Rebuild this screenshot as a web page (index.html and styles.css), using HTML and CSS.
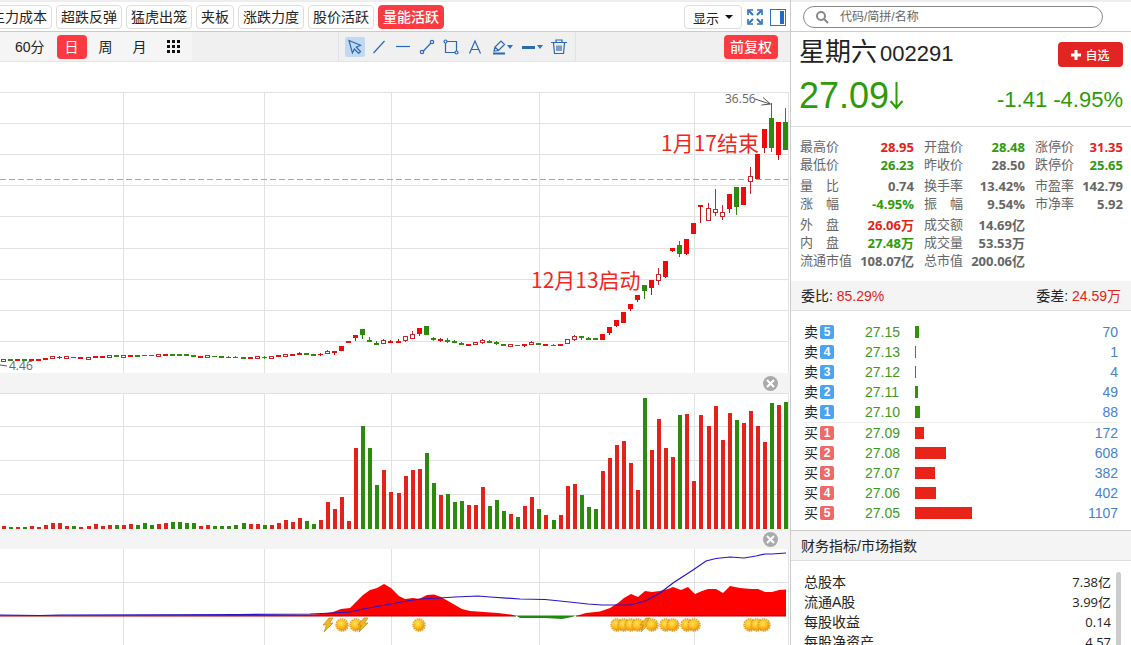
FILE: index.html
```html
<!DOCTYPE html>
<html lang="zh-CN">
<head>
    <meta charset="UTF-8">
    <meta name="viewport" content="width=device-width, initial-scale=1.0">
    <title>星期六 002291</title>
    <link rel="stylesheet" href="styles.css">
</head>
<body>
    <div class="app">
        <main class="charts">
            <nav class="indicator-bar">
                <div class="indicators">
                    <button class="tag">主力成本</button>
                    <button class="tag">超跌反弹</button>
                    <button class="tag">猛虎出笼</button>
                    <button class="tag">夹板</button>
                    <button class="tag">涨跌力度</button>
                    <button class="tag">股价活跃</button>
                    <button class="tag active">量能活跃</button>
                </div>
                <div class="view-tools">
                    <button class="display-btn">显示<span class="caret"></span></button>
                    <button class="icon-btn" aria-label="全屏">
                        <svg width="16" height="16" viewBox="0 0 16 16" fill="none" stroke="#2a72c4" stroke-width="2">
                            <path d="M1 6V1h5M10 1h5v5M15 10v5h-5M6 15H1v-5" stroke-width="1.6"/>
                            <path d="M2 2l4 4M14 2l-4 4M14 14l-4-4M2 14l4-4"/>
                        </svg>
                    </button>
                    <button class="icon-btn" aria-label="侧栏">
                        <svg width="16" height="17" viewBox="0 0 16 17">
                            <rect x=".5" y=".5" width="15" height="16" fill="#fff" stroke="#2a72c4"/>
                            <rect x="10" y="2" width="4" height="13" fill="#1f6cc5"/>
                        </svg>
                    </button>
                </div>
            </nav>

            <div class="period-bar">
                <div class="periods">
                    <button class="period">60分</button>
                    <button class="period active">日</button>
                    <button class="period">周</button>
                    <button class="period">月</button>
                    <button class="period" aria-label="更多周期">
                        <svg width="13" height="13" viewBox="0 0 13 13" fill="#111">
                            <path d="M0 0h3v3H0zM5 0h3v3H5zM10 0h3v3h-3zM0 5h3v3H0zM5 5h3v3H5zM10 5h3v3h-3zM0 10h3v3H0zM5 10h3v3H5zM10 10h3v3h-3z"/>
                        </svg>
                    </button>
                </div>
                <div class="draw-tools">
                    <button class="tool selected" aria-label="选择">
                        <svg width="16" height="16" viewBox="0 0 16 16"><path d="M2 1.5l11.5 4.8-4.2 1.9 4.2 4.3-1.8 1.8-4.3-4.3-2 3.8z"/></svg>
                    </button>
                    <button class="tool" aria-label="直线">
                        <svg width="16" height="16" viewBox="0 0 16 16"><path d="M2.500 14L13.500 2"/></svg>
                    </button>
                    <button class="tool" aria-label="水平线">
                        <svg width="16" height="16" viewBox="0 0 16 16"><path d="M1 7.500h14"/></svg>
                    </button>
                    <button class="tool" aria-label="线段">
                        <svg width="16" height="16" viewBox="0 0 16 16"><path d="M4 12.500L12 4"/><circle cx="3" cy="13" r="1.700"/><circle cx="13" cy="3" r="1.700"/></svg>
                    </button>
                    <button class="tool" aria-label="矩形">
                        <svg width="16" height="16" viewBox="0 0 16 16"><path d="M4 2.500h9.500V12M12 13.500H2.500V4"/><circle cx="2.500" cy="2.500" r="1.500"/><circle cx="13.500" cy="13.500" r="1.500"/></svg>
                    </button>
                    <button class="tool" aria-label="文字">
                        <svg width="16" height="16" viewBox="0 0 16 16"><path d="M2.500 14.500L8 2l5.500 12.500M4.500 10.500h7"/></svg>
                    </button>
                    <button class="tool wide" aria-label="画笔">
                        <svg width="16" height="16" viewBox="0 0 16 16"><path d="M3 12l1-4 6-6 3.500 3.500-6 6zM4 8l3.500 3.500"/><path d="M2 14.500h12" stroke-width="2"/></svg>
                        <span class="caret small"></span>
                    </button>
                    <button class="tool wide" aria-label="线宽">
                        <svg width="16" height="16" viewBox="0 0 16 16"><path d="M1 8.500h13" stroke-width="3"/></svg>
                        <span class="caret small"></span>
                    </button>
                    <button class="tool" aria-label="删除">
                        <svg width="16" height="16" viewBox="0 0 16 16"><path d="M0 3.500h16M5 3V1h6v2M2.500 4l1 10.500h9l1-10.500M6 6.500V12M8 6.500V12M10 6.500V12"/></svg>
                    </button>
                </div>
                <button class="adjust-btn">前复权</button>
            </div>

            <svg class="chart" id="price" viewBox="0 0 790 311">
                <g class="grid" id="price-grid"></g>
                <path class="last-price" d="M0 117.500H788"/>
                <g id="candles" shape-rendering="crispEdges"></g>
                <g class="pointer">
                    <path d="M755 37l15 5M763 35.500l7.500 6.500-9 1"/>
                    <path d="M0 303l7 1"/>
                </g>
                <text class="mark" x="725" y="41">36.56</text>
                <text class="mark" x="9" y="308">4.46</text>
                <text class="note" x="661" y="89">1月17结束</text>
                <text class="note" x="531" y="226">12月13启动</text>
            </svg>
            <div class="pane-bar">
                <button class="close-btn" aria-label="关闭"><svg width="15" height="15" viewBox="0 0 15 15"><circle cx="7.500" cy="7.500" r="7.500"/><path d="M4 4l7 7M11 4l-7 7"/></svg></button>
            </div>
            <svg class="chart" id="volume" viewBox="0 0 790 136">
                <g class="grid" id="volume-grid"></g>
                <g id="bars" shape-rendering="crispEdges"></g>
            </svg>
            <div class="pane-bar">
                <button class="close-btn" aria-label="关闭"><svg width="15" height="15" viewBox="0 0 15 15"><circle cx="7.500" cy="7.500" r="7.500"/><path d="M4 4l7 7M11 4l-7 7"/></svg></button>
            </div>
            <svg class="chart" id="energy" viewBox="0 1 790 96">
                <defs>
                    <radialGradient id="gold" cx=".4" cy=".35" r=".7">
                        <stop offset="0" stop-color="#ffe65a"/>
                        <stop offset=".6" stop-color="#fdb913"/>
                        <stop offset="1" stop-color="#e8850c"/>
                    </radialGradient>
                    <g id="sun">
                        <circle r="5.800" fill="none" stroke="#e0a030" stroke-width="1.800" stroke-dasharray="1.600 .6"/>
                        <circle r="5.400" fill="url(#gold)"/>
                    </g>
                    <path id="bolt" d="M1-7l-6 7h3.500L-4 7 5-2H1.500L5-7z" fill="#f4b71c" stroke="#b98a2c" stroke-width=".7"/>
                </defs>
                <g class="grid" id="energy-grid"></g>
                <path fill="#f00" d="M0 67.500L240 67 310 66.500 321 66 333 64 341 61 350 60 355 55 363 47 370 42 377 40 384 36 391 40 399 48 405 51 413 50 419 51 427 47 434 46.500 441 49 448 53 455 57 462 61 470 63 484 64 498 65 506 66 511 66.500 516 68H0z"/>
                <path fill="#1f8a10" d="M516 67.500L520 70H545L562 71 572 69 576 67.500z"/>
                <path fill="#f00" d="M576 68L586 65 600 63.500 610 60 618 55 624 50 631 46 638 49 645 43 652 44 660 43 668 41 673 39 681 42 688 39 695 46 702 43 708 41 716 41 723 45 730 38 740 40 751 41 758 41 765 44 772 44 779 42 786 41.500V68z"/>
                <path class="base" d="M0 68H516M576 68H786"/>
                <path class="trend" d="M0 67L40 67.500 60 67 240 66.500 310 66 333 65 350 64 363 61 391 56 407 53 420 51 440 50 455 49 478 48 490 49 520 51 545 51.500 560 53 588 56 602 57 630 57 645 53 660 45 673 35 693 22 706 13 716 10.500 730 9 744 10 756 8 765 6 772 6 786 5"/>
                <g id="signals"></g>
            </svg>
        </main>

        <aside class="quote">
            <form class="search">
                <label class="search-box">
                    <svg width="13" height="13" viewBox="0 0 13 13" fill="none" stroke="#888" stroke-width="2"><circle cx="5" cy="5" r="4"/><path d="M8 8l4 4"/></svg>
                    <input type="text" placeholder="代码/简拼/名称" aria-label="搜索">
                </label>
            </form>

            <section class="summary">
                <div class="summary-row">
                    <h1>星期六<span class="code">002291</span></h1>
                    <button class="watch-btn">
                        <svg width="10" height="10" viewBox="0 0 10 10"><path d="M5 0v10M0 5h10" stroke="#fff" stroke-width="3"/></svg>自选
                    </button>
                </div>
                <div class="summary-row down">
                    <div class="price">27.09<svg width="15" height="30" viewBox="0 0 15 30" fill="none" stroke="#2f9a0b" stroke-width="2"><path d="M7.500 1v26M1.500 20l6 7 6-7"/></svg></div>
                    <div class="change">-1.41 -4.95%</div>
                </div>
            </section>

            <table class="stats">
                <tr><th>最高价</th><td class="up">28.95</td><th>开盘价</th><td class="down">28.48</td><th>涨停价</th><td class="up">31.35</td></tr>
                <tr><th>最低价</th><td class="down">26.23</td><th>昨收价</th><td>28.50</td><th>跌停价</th><td class="down">25.65</td></tr>
                <tr class="group"><th>量　比</th><td>0.74</td><th>换手率</th><td>13.42%</td><th>市盈率</th><td>142.79</td></tr>
                <tr><th>涨　幅</th><td class="down">-4.95%</td><th>振　幅</th><td>9.54%</td><th>市净率</th><td>5.92</td></tr>
                <tr class="group"><th>外　盘</th><td class="up">26.06万</td><th>成交额</th><td>14.69亿</td><th></th><td></td></tr>
                <tr><th>内　盘</th><td class="down">27.48万</td><th>成交量</th><td>53.53万</td><th></th><td></td></tr>
                <tr><th>流通市值</th><td>108.07亿</td><th>总市值</th><td>200.06亿</td><th></th><td></td></tr>
            </table>

            <div class="ratio">
                <div>委比: <span class="up">85.29%</span></div>
                <div>委差: <span class="up">24.59万</span></div>
            </div>

            <table class="orders">
                <tbody class="sell" id="sell"></tbody>
                <tbody class="buy" id="buy"></tbody>
            </table>

            <h2>财务指标/市场指数</h2>
            <div class="finance">
                <table>
                    <tr><th>总股本</th><td>7.38亿</td></tr>
                    <tr><th>流通A股</th><td>3.99亿</td></tr>
                    <tr><th>每股收益</th><td>0.14</td></tr>
                    <tr><th>每股净资产</th><td>4.57</td></tr>
                </table>
                <div class="scroll-thumb"></div>
            </div>
        </aside>
    </div>
    <script>
        const RED = '#e2231a';
        const GREEN = '#2c8a0c';
        const COUNT_STEP = 7.045;

        // r = filled red, R = hollow red, g = green; body top, body bottom, high, low
        const candles = `R359,362 g359,361 r359,361 g359,361 r359,361 r359,361 r358,360 R356,359 r357,358,356,359 R356,359
            g357,358 r357,359 R357,360 r356,358 r356,358 R355,358 g355,357 R355,358 r355,357 g355,357
            g355,356 g355,356 R354,357 r354,356 g354,356 g354,356 g354,356 g355,357 r356,358 R355,358
            g356,357 g356,358 g357,358,356,358 g357,358,356,358 g357,359 r357,359 R356,359 g357,358,356,359 R356,359 r355,357
            R354,357 r354,356 r353,355,352,355 g353,355 g354,356 r354,355,353,356 R351,354,350,354 r351,353,351,355 r346,351 r341,343
            r335,338,335,341 g329,335,329,339 g340,342,337,342 g343,345,341,345 R340,344,339,344 r341,343,340,343 r341,343,339,343 R336,341,336,342 R334,339,331,339 r328,334,328,336
            g326,335 g338,340,337,341 r339,341,338,342 g340,342,338,343 g341,343,340,343 g343,345,342,345 r344,346 R342,345 R340,343,339,344 g341,343,340,343
            g342,344,341,345 g344,346 R344,347 g345,346 r344,346,344,347 R342,345,341,345 g343,345 r344,346 g345,346,344,346 r344,346
            R339,344 R336,340,335,341 g336,338,336,340 g338,340,337,340 g338,340 r334,340 r327,333,327,335 r320,326,320,327 r312,323 r304,309,304,311
            r295,300,295,302 g285,291,285,299 r280,288,280,295 R274,281,268,285 r261,277,261,278 r248,251,248,252 g245,254,241,257 r239,254,239,255 r223,234 r205,207,205,223
            R208,221,203,221 R209,213,189,216 R212,217,205,220 r194,209,194,213 g187,207,187,215 r187,205 R176,182,167,194 r154,179 r129,148,129,153 g118,148,103,152
            r122,155,122,160 g122,150,108,150`.split(/\s+/);

        const volumes = [
            3, 2, 2, 2, 3, 2, 4, 6, 6, 3, 3, 2, 3, 5, 3, 4, 4, 4, 5, 4,
            6, 4, 5, 6, 7, 7, 6, 6, 3, 4, 3, 3, 3, 4, 6, 5, 5, 4, 4, 6,
            9, 7, 11, 8, 5, 9, 27, 20, 32, 8, 81, 103, 81, 44, 59, 37, 36, 53, 59, 60,
            76, 46, 34, 35, 27, 28, 24, 24, 42, 23, 29, 18, 15, 12, 23, 32, 20, 14, 9, 14,
            43, 45, 34, 22, 20, 58, 71, 84, 88, 66, 39, 131, 79, 110, 81, 72, 114, 115, 48, 114,
            103, 123, 89, 116, 109, 106, 118, 103, 87, 126, 124, 127
        ];

        const sells = [[5, '27.15', 70, 4], [4, '27.13', 1, 1], [3, '27.12', 4, 1], [2, '27.11', 49, 3], [1, '27.10', 88, 5]];
        const buys = [[1, '27.09', 172, 9], [2, '27.08', 608, 31], [3, '27.07', 382, 20], [4, '27.06', 402, 21], [5, '27.05', 1107, 57]];

        function rect(x, y, w, h, color) {
            return `<rect x="${x}" y="${y}" width="${w}" height="${h}" fill="${color}"/>`;
        }

        function drawGrid(id, rows, top, bottom) {
            let d = rows.map(y => `M0 ${y + 0.5}H788`).join('');
            d += [123, 264, 391, 539, 694, 788].map(x => `M${x + 0.5} ${top}V${bottom}`).join('');
            document.getElementById(id).innerHTML = `<path d="${d}"/>`;
        }

        function drawCandles() {
            const offset = 62;
            let out = '';
            candles.forEach((item, i) => {
                const x = Math.round(4 + i * COUNT_STEP);
                const [top, bottom, high, low] = item.slice(1).split(',').map(v => v - offset);
                const color = item[0] === 'g' ? GREEN : (item[0] === 'R' ? '#c4282c' : '#f00a0a');
                if (high !== undefined) {
                    out += rect(x - 1, high, 1, low - high, item[0] === 'r' ? '#b8141a' : color);
                }
                out += rect(x - 3, top, 5, bottom - top, color);
                if (item[0] === 'R') {
                    out += rect(x - 2, top + 1, 3, bottom - top - 2, '#fff');
                }
            });
            document.getElementById('candles').innerHTML = out;
        }

        function drawVolumes() {
            document.getElementById('bars').innerHTML = volumes.map((v, i) =>
                rect(Math.round(4 + i * COUNT_STEP) - 2, 136 - v, 4, v, candles[i][0] === 'g' ? GREEN : RED)
            ).join('');
        }

        function drawSignals() {
            const signals = [
                ['bolt', [328]], ['sun', [342, 356]], ['bolt', [363]], ['sun', [419, 617, 624, 631, 638]],
                ['bolt', [645]], ['sun', [652, 666, 673, 687, 694, 750, 757, 764]]
            ];
            document.getElementById('signals').innerHTML = signals.map(([type, list]) =>
                list.map(x => `<use href="#${type}" x="${x}" y="77"/>`).join('')
            ).join('');
        }

        function fillOrders(id, name, rows) {
            document.getElementById(id).innerHTML = rows.map(([level, price, amount, width]) => `
                <tr>
                    <th>${name}<span class="level">${level}</span></th>
                    <td class="order-price">${price}</td>
                    <td><div class="bar" style="width: ${width}px"></div></td>
                    <td class="amount">${amount}</td>
                </tr>`).join('');
        }

        drawGrid('price-grid', [30, 61, 92, 123, 154, 186, 217, 248, 279], 30, 311);
        drawGrid('volume-grid', [0, 33, 67, 101], 0, 136);
        drawGrid('energy-grid', [34], 0, 97);
        drawCandles();
        drawVolumes();
        drawSignals();
        fillOrders('sell', '卖', sells);
        fillOrders('buy', '买', buys);
    </script>
</body>
</html>
```
FILE: styles.css
```css
* {
    margin: 0;
    padding: 0;
    box-sizing: border-box;
}

body {
    font-family: "Liberation Sans", "Noto Sans CJK SC", sans-serif;
    font-size: 14px;
    color: #222;
    background: #fff;
}

button {
    font-family: inherit;
    font-size: 14px;
    color: #222;
    border: none;
    background: none;
    cursor: pointer;
    white-space: nowrap;
}

svg {
    display: block;
}

th {
    font-weight: normal;
    text-align: left;
    white-space: nowrap;
}

.app {
    display: flex;
    height: 100vh;
    overflow: hidden;
}

.up {
    color: #e2231a;
}

.down {
    color: #2f9a0b;
}

/* Charts */
.charts {
    flex: 1;
    min-width: 0;
    overflow: hidden;
    border-right: 1px solid #ccc;
}

.indicator-bar {
    display: flex;
    justify-content: space-between;
    align-items: center;
    height: 32px;
    padding-top: 1px;
    border-top: 2px solid #eee;
    border-bottom: 1px solid #ccc;
}

.indicators {
    display: flex;
    gap: 4px;
    margin-left: -14px;
}

.tag {
    height: 24px;
    padding: 0 4px;
    line-height: 22px;
    border: 1px solid #ddd;
    border-radius: 4px;
}

.tag.active {
    color: #fff;
    font-weight: 500;
    background: #fb3b41;
    border-color: #fb3b41;
}

.view-tools {
    display: flex;
    align-items: center;
    gap: 5px;
    padding-right: 4px;
}

.display-btn {
    display: flex;
    align-items: center;
    gap: 6px;
    height: 24px;
    padding: 0 8px;
    font-size: 13px;
    border: 1px solid #ddd;
    border-radius: 4px;
}

.icon-btn + .icon-btn {
    margin-left: 2px;
}

.caret {
    border: 4px solid transparent;
    border-top: 4px solid #111;
    border-bottom: none;
}

.caret.small {
    border-width: 3px;
    border-top: 4px solid #2a72c4;
    border-bottom: none;
}

.period-bar {
    display: flex;
    align-items: center;
    height: 30px;
    background: #f0f0f0;
    border-bottom: 1px solid #e4e4e4;
}

.periods {
    display: flex;
    align-items: center;
    gap: 4px;
    height: 29px;
    width: 192px;
    padding-left: 7px;
    background: #f5f5f5;
}

.period {
    height: 24px;
    padding: 0 8px;
    line-height: 24px;
    border-radius: 4px;
}

.period.active {
    color: #fff;
    background: #fb3b41;
}

.draw-tools {
    display: flex;
    align-items: center;
    gap: 4px;
    height: 29px;
    margin-left: 146px;
    padding: 0 6px;
    border-left: 1px solid #e2e2e2;
    border-right: 1px solid #e2e2e2;
}

.tool {
    display: flex;
    align-items: center;
    justify-content: center;
    width: 20px;
    height: 20px;
    border-radius: 2px;
}

.tool.wide {
    width: 26px;
}

.tool.selected {
    background: #c3d9f1;
}

.tool svg {
    flex: none;
    fill: none;
    stroke: #2a68b4;
    stroke-width: 1.2;
}

.adjust-btn {
    height: 24px;
    margin-left: auto;
    margin-right: 12px;
    padding: 0 6px;
    line-height: 24px;
    font-weight: 500;
    color: #fff;
    background: #fb3b41;
    border-radius: 4px;
}

.chart {
    width: 100%;
    height: auto;
}

.grid {
    fill: none;
    stroke: #e2e2e2;
    stroke-width: 1;
}

.last-price {
    stroke: #f09a30;
    stroke-dasharray: 6 3;
}

.pointer {
    fill: none;
    stroke: #555;
}

.mark {
    font-family: "Open Sans", sans-serif;
    font-size: 12px;
    fill: #666;
}

.note {
    font-family: "Noto Sans CJK SC", sans-serif;
    font-size: 21px;
    fill: #f0281e;
}

.base {
    stroke: #a00;
    stroke-width: 1;
}

.trend {
    fill: none;
    stroke: #2416c8;
    stroke-width: 1.2;
}

.pane-bar {
    display: flex;
    justify-content: flex-end;
    align-items: center;
    height: 20px;
    padding-right: 12px;
    background: #f4f4f4;
}

.close-btn svg {
    fill: #aaa;
    stroke: #fff;
    stroke-width: 2;
}

.close-btn circle {
    stroke: none;
}

/* Quote panel */
.quote {
    display: flex;
    flex-direction: column;
    flex: none;
    width: 340px;
}

.search {
    height: 32px;
    padding: 4px 28px 0 12px;
    border-top: 2px solid #eee;
    border-bottom: 1px solid #ccc;
}

.search-box {
    display: flex;
    align-items: center;
    gap: 11px;
    height: 22px;
    padding: 0 12px;
    border: 1px solid #888;
    border-radius: 11px;
}

.search-box input {
    flex: 1;
    font-family: inherit;
    font-size: 12px;
    border: none;
    outline: none;
}

.search-box input::placeholder {
    color: #666;
}

.summary {
    height: 95px;
    padding: 2px 8px 0;
    border-bottom: 1px solid #ddd;
}

.summary-row {
    display: flex;
    justify-content: space-between;
    align-items: center;
    height: 41px;
}

h1 {
    margin-bottom: 4px;
    font-size: 26px;
    font-weight: normal;
    line-height: 36px;
}

.code {
    margin-left: 3px;
    font-size: 22px;
}

.watch-btn {
    display: flex;
    align-items: center;
    justify-content: center;
    gap: 4px;
    width: 65px;
    height: 25px;
    font-size: 12px;
    font-weight: 500;
    color: #fff;
    background: #e22522;
    border-radius: 4px;
}

.price {
    display: flex;
    align-items: center;
    font-size: 36px;
}

.change {
    padding-top: 8px;
    font-size: 22px;
}

.stats {
    width: 323px;
    margin: 11px 8px 11px 9px;
    border-collapse: collapse;
    table-layout: fixed;
    color: #666;
    font-size: 13px;
    line-height: 18px;
}

.stats th:nth-child(1) {
    width: 54px;
}

.stats td:nth-child(2) {
    width: 60px;
}

.stats th:nth-child(3) {
    width: 54px;
}

.stats td:nth-child(4) {
    width: 57px;
}

.stats th:nth-child(n + 3) {
    padding-left: 10px;
}

.stats td {
    font-family: "Open Sans", "Noto Sans CJK SC", sans-serif;
    font-weight: bold;
    text-align: right;
    white-space: nowrap;
}

.stats .group > * {
    padding-top: 3px;
}

.stats .up {
    color: #e2231a;
}

.stats .down {
    color: #2f9a0b;
}

.ratio {
    display: flex;
    justify-content: space-between;
    height: 30px;
    padding: 0 10px;
    line-height: 30px;
    background: #f4f4f4;
    border-bottom: 1px solid #ddd;
}

.orders {
    width: 314px;
    margin: 11px 13px 7px;
    border-collapse: collapse;
    line-height: 20px;
}

.orders tr {
    height: 20px;
}

.orders th {
    width: 61px;
}

.orders .buy {
    border-top: 1px solid #eee;
}

.level {
    display: inline-block;
    width: 14px;
    height: 14px;
    margin-left: 2px;
    font-size: 12px;
    font-weight: bold;
    line-height: 14px;
    text-align: center;
    vertical-align: 1px;
    color: #fff;
    background: #4da3f2;
    border-radius: 2px;
}

.buy .level {
    background: #ef6a66;
}

.order-price {
    width: 50px;
    color: #3d9a1c;
}

.bar {
    height: 12px;
    background: #2f9406;
}

.buy .bar {
    background: #e82318;
}

.amount {
    text-align: right;
    color: #4a80cc;
}

h2 {
    height: 31px;
    padding-left: 10px;
    font-size: 14px;
    font-weight: normal;
    line-height: 30px;
    background: #f4f4f4;
    border-top: 1px solid #ccc;
    border-bottom: 1px solid #ddd;
}

.finance {
    display: flex;
    flex: 1;
    gap: 5px;
    min-height: 0;
    padding: 11px 10px 0 13px;
    overflow: hidden;
}

.finance table {
    flex: 1;
    border-collapse: collapse;
    line-height: 20px;
}

.finance td {
    font-family: "Open Sans", "Noto Sans CJK SC", sans-serif;
    font-size: 13px;
    text-align: right;
}

.scroll-thumb {
    width: 5px;
    background: #ccc;
    border-radius: 3px 3px 0 0;
}
```
